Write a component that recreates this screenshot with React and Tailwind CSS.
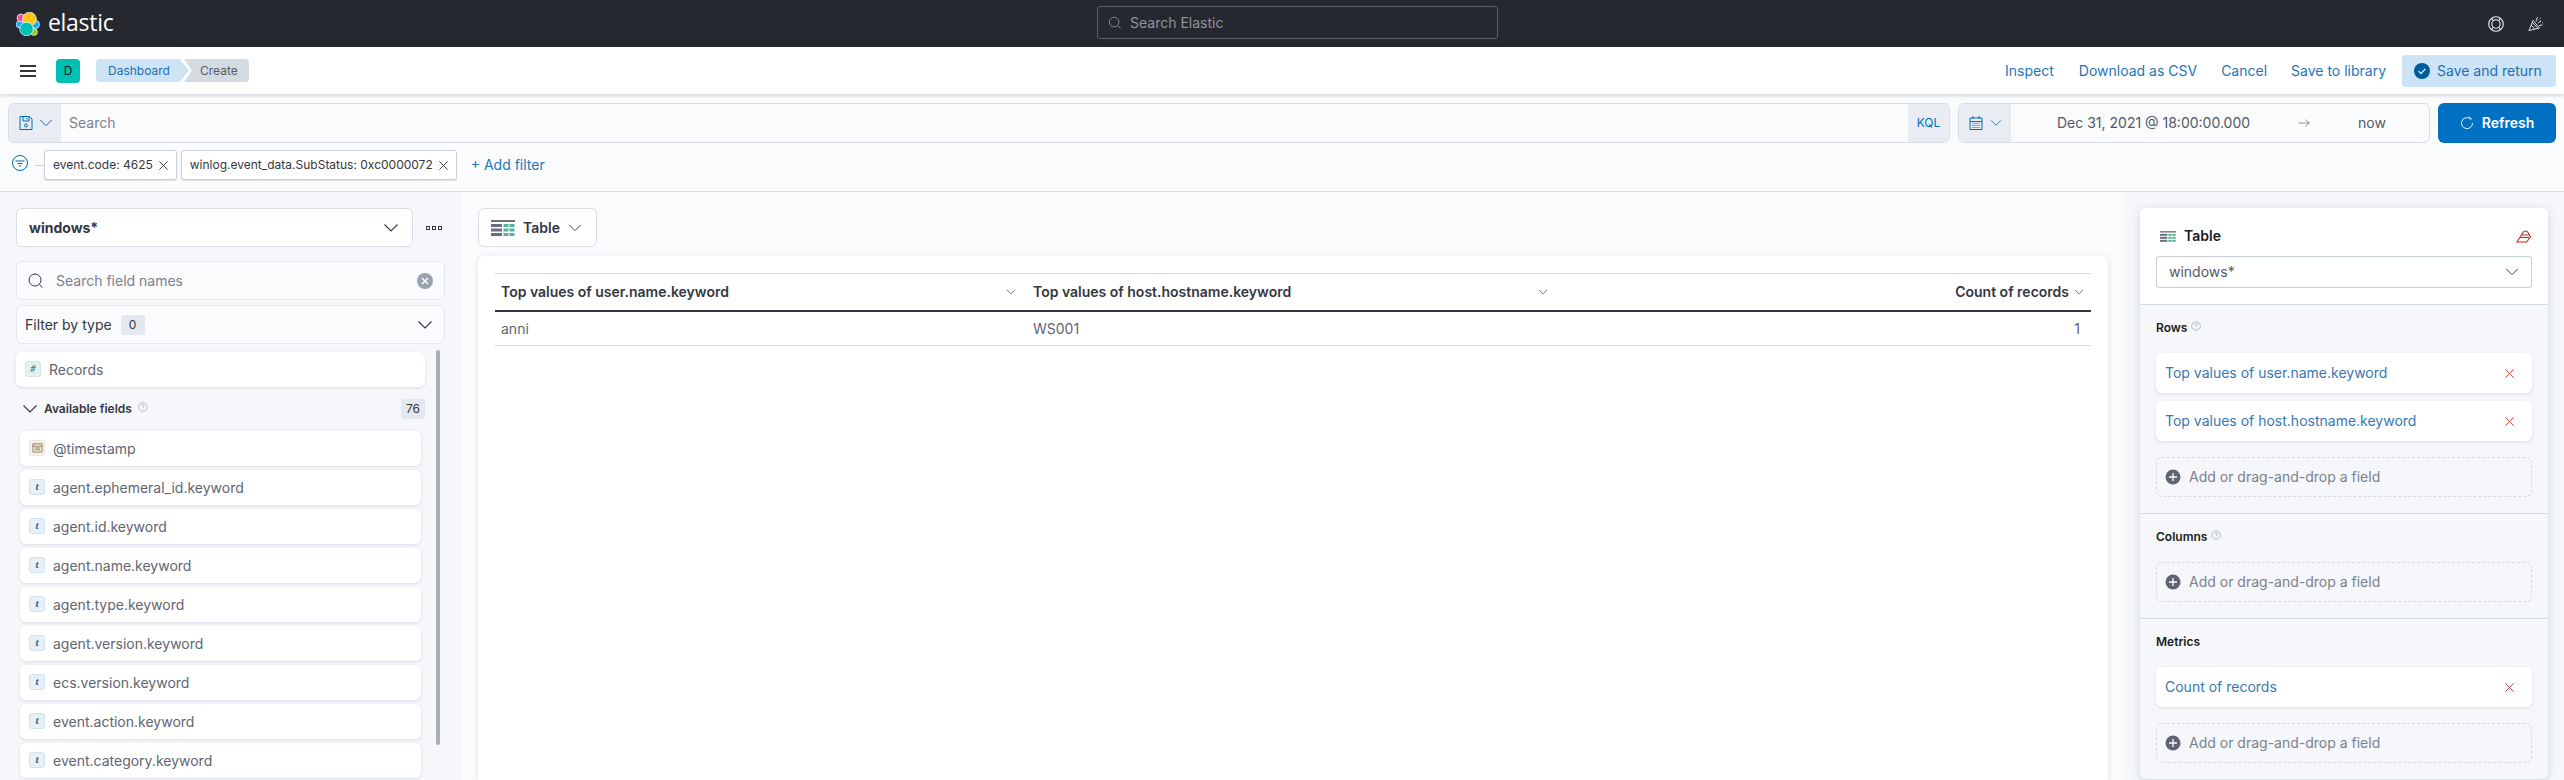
import React from 'react';

const fieldNames = [
    'agent.ephemeral_id.keyword',
    'agent.id.keyword',
    'agent.name.keyword',
    'agent.type.keyword',
    'agent.version.keyword',
    'ecs.version.keyword',
    'event.action.keyword',
    'event.category.keyword',
];

const Chevron = ({ className = 'w-4 h-4', color = '#343741' }) => (
    <svg viewBox="0 0 16 16" className={className} fill="none" stroke={color} strokeWidth="1.1">
        <path d="M1.5 4.5 8 11l6.5-6.5" />
    </svg>
);

const Cross = ({ className = 'w-3 h-3', color = '#343741', width = 1 }) => (
    <svg viewBox="0 0 12 12" className={className} fill="none" stroke={color} strokeWidth={width}>
        <path d="M1.5 1.5l9 9M10.5 1.5l-9 9" />
    </svg>
);

const Help = () => (
    <svg viewBox="0 0 12 12" className="w-[10px] h-[10px] -mt-[5px] shrink-0" fill="none" stroke="#98a2b3" strokeWidth="0.8">
        <circle cx="6" cy="6" r="5.2" />
        <path d="M4.4 4.7c0-2.1 3.3-2 3.3 0 0 1.2-1.7 1.2-1.7 2.6M6 8.4v.9" />
    </svg>
);

const TableIcon = ({ className }) => (
    <svg viewBox="0 0 24 16" className={className}>
        <rect x="0" y="0" width="24" height="2" fill="#69707d" />
        <rect x="0" y="4" width="11" height="3" fill="#69707d" />
        <rect x="0" y="8.5" width="11" height="3" fill="#69707d" />
        <rect x="0" y="13" width="11" height="3" fill="#69707d" />
        {[12.5, 18.5].map((x) => (
            <g key={x} fill="#54b399">
                <rect x={x} y="4" width="5" height="3" />
                <rect x={x} y="8.5" width="5" height="3" />
                <rect x={x} y="13" width="5" height="3" />
            </g>
        ))}
    </svg>
);

const ElasticLogo = () => (
    <svg viewBox="0 0 24 24" className="w-6 h-6" stroke="#ffffff" strokeWidth="0.7">
        <circle cx="5" cy="6" r="4" fill="#ee5097" />
        <circle cx="3.6" cy="12.5" r="3.4" fill="#1ba9f5" />
        <circle cx="19.5" cy="12.5" r="4" fill="#1ba9f5" />
        <circle cx="13.5" cy="7" r="6.8" fill="#fec514" />
        <circle cx="18" cy="20" r="3.4" fill="#93c90e" />
        <circle cx="10.5" cy="17" r="6.8" fill="#00bfb3" />
    </svg>
);

const FieldType = ({ bg, border, children }) => (
    <span className={`w-4 h-4 rounded-[3px] border ${bg} ${border} flex items-center justify-center shrink-0 -mt-[2px]`}>
        {children}
    </span>
);

const StringIcon = () => (
    <FieldType bg="bg-[#e6f0f8]" border="border-[#d0e2f0]">
        <span className="font-['Liberation_Serif',serif] font-bold italic text-[11px] leading-none text-[#44617e]">t</span>
    </FieldType>
);

const FieldRow = ({ icon, label }) => (
    <div className="h-[35px] bg-white rounded-md shadow-[0_1px_3px_rgba(152,162,179,0.3)] flex items-center pl-[9px] gap-2 text-sm text-[#5f6571]">
        {icon}
        <span>{label}</span>
    </div>
);

const Pill = ({ label }) => (
    <div className="h-10 bg-white rounded-md shadow-[0_1px_3px_rgba(152,162,179,0.3)] flex items-center pl-[9px] pr-[17px] justify-between text-sm text-[#3a77b0]">
        <span>{label}</span>
        <Cross className="w-[11px] h-[11px]" color="#c4423a" />
    </div>
);

const AddField = () => (
    <div className="h-10 rounded-md border border-dashed border-[#d3dae6] flex items-center pl-2 gap-2 text-sm text-[#7b818c]">
        <svg viewBox="0 0 16 16" className="w-4 h-4 shrink-0">
            <circle cx="8" cy="8" r="7.5" fill="#5e6472" />
            <path d="M8 4v8M4 8h8" stroke="#ffffff" strokeWidth="1.3" />
        </svg>
        <span>Add or drag-and-drop a field</span>
    </div>
);

const Section = ({ title, help, children, last }) => (
    <div className={`px-4 pt-[14px] ${last ? '' : 'border-b border-[#d3dae6] pb-4'}`}>
        <div className="flex items-center gap-1 h-[18px] text-xs font-semibold text-[#1a1c21] mb-4">
            {title}
            {help && <Help />}
        </div>
        <div className="flex flex-col gap-2">{children}</div>
    </div>
);

const FilterPill = ({ label }) => (
    <div className="h-[30px] bg-white border border-[#c9cfd9] rounded-[3px] shadow-[0_1px_1px_rgba(152,162,179,0.3)] flex items-center pl-2 pr-[7px] gap-[5px] text-xs text-[#343741]">
        <span>{label}</span>
        <Cross className="w-[11px] h-[11px]" />
    </div>
);

const App = () => {
    return (
        <div className="w-full h-[780px] overflow-hidden flex flex-col bg-[#fafbfd] font-['Inter',sans-serif] text-[#343741]">
            {/* Dark header */}
            <header className="h-[47px] shrink-0 bg-[#25282f] flex items-center justify-between pl-4 pr-5 relative">
                <div className="flex items-center gap-2">
                    <ElasticLogo />
                    <span className="font-['Open_Sans',sans-serif] text-[23px] leading-none text-white -mt-[2px] tracking-[-0.3px]">elastic</span>
                </div>
                <div className="absolute left-[1097px] top-[6px] w-[401px] h-[33px] rounded-[3px] border border-[#5a5e68] bg-[#25282f] flex items-center pl-[10px] gap-2 text-sm text-[#8f94a0]">
                    <svg viewBox="0 0 16 16" className="w-[14px] h-[14px]" fill="none" stroke="#8f94a0" strokeWidth="1">
                        <circle cx="7" cy="7" r="5.5" />
                        <path d="M11 11l3.5 3.5" />
                    </svg>
                    <span>Search Elastic</span>
                </div>
                <div className="flex items-center gap-[24px]">
                    <svg viewBox="0 0 16 16" className="w-4 h-4" fill="none" stroke="#f0f2f5" strokeWidth="1.1">
                        <circle cx="8" cy="8" r="7.3" />
                        <circle cx="8" cy="8" r="4.2" />
                        <path d="M3.6 2.4 5.4 5M12.4 2.4 10.6 5M3.6 13.6l1.8-2.6M12.4 13.6 10.6 11" />
                    </svg>
                    <svg viewBox="0 0 16 16" className="w-4 h-4" fill="none" stroke="#f0f2f5" strokeWidth="0.9">
                        <path d="M1 14.5 5 4.5l6.5 7.5zM3.2 9l3.5 4M4.4 6.5l5 5.3" />
                        <path d="M8 5.5 9.5 1M10 7l3-2M11 9.5l3.5-.5M12 2.2h.8M14 6.8h.8M10.8 4h.6" />
                    </svg>
                </div>
            </header>

            {/* App toolbar */}
            <div className="h-[47px] shrink-0 bg-white shadow-[0_2px_3px_rgba(152,162,179,0.35)] flex items-center justify-between pl-5 pr-2 relative">
                <div className="flex items-center">
                    <div className="w-4 flex flex-col gap-[3px]">
                        <span className="h-[2px] bg-[#343741]"></span>
                        <span className="h-[2px] bg-[#343741]"></span>
                        <span className="h-[2px] bg-[#343741]"></span>
                    </div>
                    <div className="ml-5 w-6 h-6 rounded-[4px] bg-[#00bfb3] flex items-center justify-center text-xs text-[#1a1c21]">D</div>
                    <div className="ml-4 flex text-xs h-[23px]">
                        <span className="w-[93px] bg-[#cce4f5] text-[#1f6fb0] flex items-center pl-3 rounded-l-[4px] [clip-path:polygon(0_0,90%_0,100%_50%,90%_100%,0_100%)]">Dashboard</span>
                        <span className="w-[65px] -ml-[5px] bg-[#d3dae0] text-[#535966] flex items-center pl-[16px] rounded-r-[4px] [clip-path:polygon(0_0,100%_0,100%_100%,0_100%,12%_50%)]">Create</span>
                    </div>
                </div>
                <div className="flex items-center text-sm text-[#1f75b8]">
                    <span>Inspect</span>
                    <span className="ml-[25px]">Download as CSV</span>
                    <span className="ml-6">Cancel</span>
                    <span className="ml-6">Save to library</span>
                    <div className="ml-4 w-[154px] h-[32px] bg-[#cce4f5] rounded-[3px] flex items-center pl-3 gap-[7px] text-[#1f6fb0]">
                        <svg viewBox="0 0 16 16" className="w-4 h-4 shrink-0">
                            <circle cx="8" cy="8" r="8" fill="#005a9e" />
                            <path d="M4.6 8.2 7 10.6l4.4-4.8" fill="none" stroke="#ffffff" strokeWidth="1.2" />
                        </svg>
                        <span>Save and return</span>
                    </div>
                </div>
            </div>

            {/* Query bar + filters */}
            <div className="h-[98px] shrink-0 border-b border-[#d3dae6] px-2 pt-[9px]">
                <div className="flex h-10 gap-2">
                    <div className="flex-1 flex border border-[#d8dde6] rounded-md overflow-hidden bg-[#fafbfd]">
                        <div className="w-[52px] bg-[#e9edf3] flex items-center pl-[9px] gap-[5px]">
                            <svg viewBox="0 0 16 16" className="w-4 h-4" fill="none" stroke="#006bb4" strokeWidth="1">
                                <path d="M2 1.5h9.5L14 4v10.5H2zM5 1.5V6h6V1.5M9 3v1.5" />
                                <circle cx="8" cy="10.5" r="1.5" />
                            </svg>
                            <Chevron className="w-[14px] h-[14px]" color="#006bb4" />
                        </div>
                        <div className="flex-1 flex items-center pl-2 text-sm text-[#7b818c]">Search</div>
                        <div className="w-[41px] bg-[#e9edf3] flex items-center justify-center text-xs text-[#006bb4]">KQL</div>
                    </div>
                    <div className="w-[472px] flex border border-[#d8dde6] rounded-md overflow-hidden bg-[#fafbfd]">
                        <div className="w-[52px] bg-[#e9edf3] flex items-center pl-[9px] gap-[6px]">
                            <svg viewBox="0 0 16 16" className="w-4 h-4" fill="none" stroke="#006bb4" strokeWidth="1">
                                <path d="M2 3h12v11.5H2zM2 6.5h12M5 1v3M11 1v3" />
                                <path d="M4.5 8.5h7M4.5 10.5h7M4.5 12.5h7" strokeDasharray="1 1" />
                            </svg>
                            <Chevron className="w-3 h-3" color="#006bb4" />
                        </div>
                        <div className="flex-1 flex items-center text-sm text-[#535966]">
                            <span className="ml-[46px]">Dec 31, 2021 @ 18:00:00.000</span>
                            <svg viewBox="0 0 16 16" className="w-3 h-3 ml-[48px]" fill="none" stroke="#69707d" strokeWidth="1">
                                <path d="M1 8h14M10 3.5 15 8l-5 4.5" />
                            </svg>
                            <span className="ml-[48px]">now</span>
                        </div>
                    </div>
                    <div className="w-[118px] bg-[#0071c2] rounded-md flex items-center justify-center gap-2 text-sm font-semibold text-white">
                        <svg viewBox="0 0 16 16" className="w-[14px] h-[14px]" fill="none" stroke="#ffffff" strokeWidth="1">
                            <path d="M11 2.6A6.3 6.3 0 1 0 14.3 8M11 .5v2.8H13.8" />
                        </svg>
                        <span>Refresh</span>
                    </div>
                </div>
                <div className="flex items-center h-[30px] mt-[7px]">
                    <svg viewBox="0 0 16 16" className="w-4 h-4 ml-[4px] -mt-1 shrink-0" fill="none" stroke="#006bb4" strokeWidth="1">
                        <circle cx="8" cy="8" r="7.5" />
                        <path d="M3.5 6h9M5.5 8.5h5M7 11h2" />
                    </svg>
                    <span className="w-[9px] h-px bg-[#c9cfd9] ml-[7px]"></span>
                    <FilterPill label="event.code: 4625" />
                    <div className="w-1"></div>
                    <FilterPill label="winlog.event_data.SubStatus: 0xc0000072" />
                    <span className="ml-[14px] text-sm text-[#1f75b8]">+ Add filter</span>
                </div>
            </div>

            {/* Editor body */}
            <div className="flex-1 min-h-0 flex">
                {/* Field list */}
                <aside className="w-[462px] shrink-0 bg-[#f5f7fa] pl-4 pt-4 overflow-hidden">
                    <div className="flex items-center h-[39px]">
                        <div className="w-[397px] h-full bg-white border border-[#d8dde6] rounded-md flex items-center justify-between pl-3 pr-[13px] text-sm font-bold text-[#343741]">
                            <span>windows*</span>
                            <Chevron />
                        </div>
                        <div className="ml-[13px] flex gap-[2px]">
                            <span className="w-1 h-1 border border-[#343741]"></span>
                            <span className="w-1 h-1 border border-[#343741]"></span>
                            <span className="w-1 h-1 border border-[#343741]"></span>
                        </div>
                    </div>
                    <div className="w-[429px] h-[39px] mt-[14px] bg-[#fafbfd] border border-[#e3e7ee] rounded-md flex items-center pl-[11px] pr-[11px] text-sm text-[#7b818c]">
                        <svg viewBox="0 0 16 16" className="w-4 h-4 shrink-0" fill="none" stroke="#343741" strokeWidth="1">
                            <circle cx="7" cy="7" r="6" />
                            <path d="M11.5 11.5l3 3" />
                        </svg>
                        <span className="ml-3 flex-1">Search field names</span>
                        <span className="w-4 h-4 rounded-full bg-[#98a2b3] flex items-center justify-center">
                            <Cross className="w-2 h-2" color="#ffffff" width={2.2} />
                        </span>
                    </div>
                    <div className="w-[429px] h-[39px] mt-[5px] bg-[#fafbfd] border border-[#e3e7ee] rounded-md flex items-center pl-2 pr-[11px] text-sm text-[#343741]">
                        <span>Filter by type</span>
                        <span className="ml-[9px] w-6 h-5 rounded-[3px] bg-[#e3e7ee] flex items-center justify-center text-xs">0</span>
                        <Chevron className="w-4 h-4 ml-auto" />
                    </div>

                    <div className="relative mt-2 w-[429px] pr-5">
                        <span className="absolute right-[5px] -top-[2px] w-1 h-[395px] bg-[#a9adb5] rounded-sm"></span>
                        <FieldRow
                            label="Records"
                            icon={
                                <FieldType bg="bg-[#e3f3ee]" border="border-[#d0e8df]">
                                    <span className="font-['Liberation_Serif',serif] font-bold italic text-[10px] leading-none text-[#38806c]">#</span>
                                </FieldType>
                            }
                        />
                        <div className="flex items-center h-[20px] mt-[12px] pl-[6px] text-xs font-semibold text-[#343741]">
                            <Chevron className="w-[16px] h-[16px] mr-[6px]" />
                            <span className="mr-[6px]">Available fields</span>
                            <Help />
                            <span className="ml-auto w-6 h-5 rounded-[3px] bg-[#e3e7ee] flex items-center justify-center text-xs font-normal">76</span>
                        </div>
                        <div className="mt-[12px] mx-1 flex flex-col gap-1">
                            <FieldRow
                                label="@timestamp"
                                icon={
                                    <FieldType bg="bg-[#f7f2e6]" border="border-[#efe8d8]">
                                        <svg viewBox="0 0 12 12" className="w-[11px] h-[11px]" fill="none" stroke="#7d6b44" strokeWidth="0.9">
                                            <path d="M1 2h10v9H1zM1 4.5h10M3 6.5h6M3 8.5h6" />
                                        </svg>
                                    </FieldType>
                                }
                            />
                            {fieldNames.map((name) => (
                                <FieldRow key={name} label={name} icon={<StringIcon />} />
                            ))}
                        </div>
                    </div>
                </aside>

                {/* Workspace */}
                <main className="flex-1 min-w-0 pl-4 pr-[17px] pt-4 flex flex-col">
                    <div className="w-[119px] h-[39px] bg-white border border-[#d8dde6] rounded-md flex items-center pl-3 text-sm font-semibold text-[#343741]">
                        <TableIcon className="w-6 h-4 mr-2" />
                        <span>Table</span>
                        <Chevron className="w-[14px] h-[14px] ml-[8px]" />
                    </div>
                    <div className="mt-[9px] flex-1 bg-white rounded-t-md shadow-[0_1px_6px_rgba(152,162,179,0.3)] px-[17px] pt-[17px]">
                        <div className="h-[39px] border-t border-[#d3dae6] border-b-2 !border-b-[#343741] flex items-center text-sm font-semibold text-[#343741]">
                            <div className="w-[532px] flex items-center justify-between pl-[6px] pr-[11px]">
                                <span>Top values of user.name.keyword</span>
                                <Chevron className="w-[10px] h-[10px]" />
                            </div>
                            <div className="w-[532px] flex items-center justify-between pl-[6px] pr-[11px]">
                                <span>Top values of host.hostname.keyword</span>
                                <Chevron className="w-[10px] h-[10px]" />
                            </div>
                            <div className="flex-1 flex items-center justify-end gap-[5px] pr-[7px]">
                                <span>Count of records</span>
                                <Chevron className="w-[10px] h-[10px]" />
                            </div>
                        </div>
                        <div className="h-[34px] border-b border-[#d3dae6] flex items-center text-sm text-[#5f6571]">
                            <div className="w-[532px] pl-[6px]">anni</div>
                            <div className="w-[532px] pl-[6px]">WS001</div>
                            <div className="flex-1 text-right pr-[11px]">1</div>
                        </div>
                    </div>
                </main>

                {/* Dimension panel */}
                <aside className="w-[439px] shrink-0 bg-[#f5f7fa] pl-[15px] pr-4 pt-4">
                    <div className="h-[571px] rounded-md shadow-[0_2px_8px_rgba(152,162,179,0.4)] bg-[#f5f7fa] overflow-hidden">
                        <div className="h-[97px] bg-white border-b border-[#d3dae6] px-4 pt-[18px]">
                            <div className="flex items-center justify-between h-[20px]">
                                <div className="flex items-center pl-1 text-sm font-semibold text-[#1a1c21]">
                                    <TableIcon className="w-4 h-[11px] mr-2" />
                                    <span>Table</span>
                                </div>
                                <svg viewBox="0 0 16 16" className="w-4 h-4" fill="none" stroke="#bd271e" strokeWidth="1.1">
                                    <path d="M1 14 7 4.5c1-2 4-2 5 0l2.5 4.5-4 5zM1 14h9.5M5.5 7l7 0M4.5 9.5h8.5" />
                                </svg>
                            </div>
                            <div className="mt-[10px] h-[32px] bg-white border border-[#c9cfd9] rounded-[3px] flex items-center justify-between pl-[12px] pr-[12px] text-sm text-[#535966]">
                                <span>windows*</span>
                                <Chevron className="w-[14px] h-[14px]" />
                            </div>
                        </div>
                        <Section title="Rows" help>
                            <Pill label="Top values of user.name.keyword" />
                            <Pill label="Top values of host.hostname.keyword" />
                            <div className="mt-2"><AddField /></div>
                        </Section>
                        <Section title="Columns" help>
                            <AddField />
                        </Section>
                        <Section title="Metrics" last>
                            <Pill label="Count of records" />
                            <div className="mt-2"><AddField /></div>
                        </Section>
                    </div>
                </aside>
            </div>
        </div>
    );
};

export default App;
